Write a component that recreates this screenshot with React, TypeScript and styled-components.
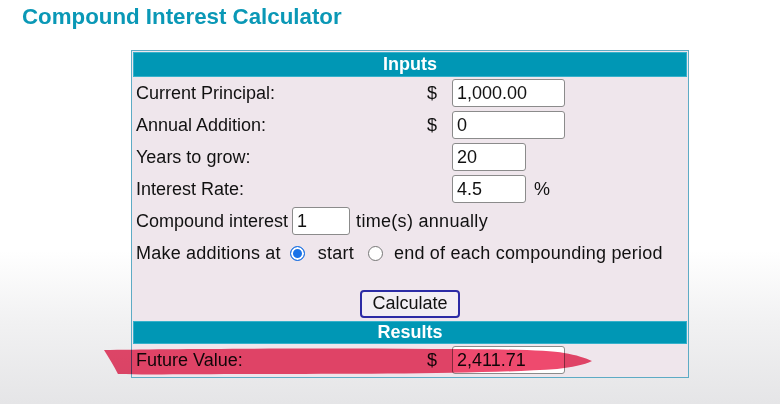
import React from "react";
import styled, { createGlobalStyle } from "styled-components";

const GlobalStyle = createGlobalStyle`
  html, body {
    margin: 0;
    padding: 0;
    height: 404px;
    overflow: hidden;
  }
  body {
    font-family: "Liberation Sans", Arial, sans-serif;
    background: linear-gradient(to bottom, #ffffff 0%, #ffffff 62%, #f1f1f2 80%, #e5e5e7 100%);
    color: #111;
  }
`;

const Page = styled.div`
  padding: 5px 0 0 22px;
`;

const Title = styled.h1`
  margin: 0;
  font-size: 22.3px;
  line-height: 24px;
  font-weight: bold;
  color: #0a98b6;
`;

const Panel = styled.div`
  position: relative;
  box-sizing: border-box;
  width: 558px;
  margin: 21px 0 0 109px;
  border: 1px solid #5eabc5;
  padding: 1px;
  background: #efe6ec;
  font-size: 18px;
`;

const SectionBar = styled.div<{ $h: number; $mt?: number }>`
  height: ${(p) => p.$h}px;
  margin-top: ${(p) => p.$mt ?? 0}px;
  background: #0097b5;
  border: 1px solid #36b1cb;
  box-sizing: border-box;
  color: #ffffff;
  font-weight: bold;
  font-size: 18px;
  display: flex;
  align-items: center;
  justify-content: center;
`;

const Row = styled.div`
  display: grid;
  grid-template-columns: 290px 24px 1fr;
  align-items: center;
  height: 32px;
  position: relative;
`;

const Label = styled.div`
  padding-left: 3px;
  white-space: nowrap;
`;

const Dollar = styled.div`
  text-align: right;
  padding-right: 10px;
`;

const InputCell = styled.div`
  padding-left: 5px;
  display: flex;
  align-items: center;
  gap: 8px;
`;

const Field = styled.input<{ $w: number }>`
  box-sizing: border-box;
  width: ${(p) => p.$w}px;
  height: 28px;
  border: 1px solid #8b8b8b;
  border-radius: 3px;
  background: #ffffff;
  font-family: "Liberation Sans", Arial, sans-serif;
  font-size: 18px;
  letter-spacing: 0;
  color: #111;
  padding: 0 4px;
  margin: 0;
  outline: none;
`;

const FlowRow = styled.div<{ $ls: number }>`
  display: flex;
  align-items: center;
  height: 32px;
  padding-left: 3px;
  white-space: nowrap;
  letter-spacing: ${(p) => p.$ls}px;
`;

const Spaced = styled.span`
  letter-spacing: 0.3px;
`;

const Gap = styled.span<{ $w: number }>`
  display: inline-block;
  width: ${(p) => p.$w}px;
`;

const Radio = styled.span<{ $checked?: boolean; $ml: number; $mr: number }>`
  box-sizing: border-box;
  display: inline-block;
  flex: none;
  width: 15px;
  height: 15px;
  border-radius: 50%;
  margin: 0 ${(p) => p.$mr}px 0 ${(p) => p.$ml}px;
  background: ${(p) => (p.$checked ? "#1a73e8" : "#ffffff")};
  border: ${(p) => (p.$checked ? "1px solid #1a6fe0" : "1px solid #767676")};
  box-shadow: ${(p) => (p.$checked ? "inset 0 0 0 2px #ffffff" : "none")};
`;

const Spacer = styled.div`
  height: 19px;
`;

const ButtonRow = styled.div`
  height: 31px;
  display: flex;
  align-items: center;
  justify-content: center;
`;

const CalcButton = styled.button`
  box-sizing: border-box;
  width: 100px;
  height: 28px;
  border: 2px solid #2b2ba6;
  border-radius: 4px;
  background: #f2eef4;
  font-family: "Liberation Sans", Arial, sans-serif;
  font-size: 18px;
  color: #111;
  padding: 0;
`;

const Highlight = styled.svg`
  position: absolute;
  left: -29px;
  top: 2px;
  width: 488px;
  height: 30px;
  mix-blend-mode: multiply;
  pointer-events: none;
`;

export default function App() {
  return (
    <>
      <GlobalStyle />
      <Page>
        <Title>Compound Interest Calculator</Title>
        <Panel>
          <SectionBar $h={25}>Inputs</SectionBar>
          <Row>
            <Label>Current Principal:</Label>
            <Dollar>$</Dollar>
            <InputCell>
              <Field $w={113} defaultValue="1,000.00" />
            </InputCell>
          </Row>
          <Row>
            <Label>Annual Addition:</Label>
            <Dollar>$</Dollar>
            <InputCell>
              <Field $w={113} defaultValue="0" />
            </InputCell>
          </Row>
          <Row>
            <Label>Years to grow:</Label>
            <Dollar />
            <InputCell>
              <Field $w={74} defaultValue="20" />
            </InputCell>
          </Row>
          <Row>
            <Label>Interest Rate:</Label>
            <Dollar />
            <InputCell>
              <Field $w={74} defaultValue="4.5" />
              <span>%</span>
            </InputCell>
          </Row>
          <FlowRow $ls={0}>
            Compound interest
            <Gap $w={4} />
            <Field $w={58} defaultValue="1" />
            <Gap $w={6} />
            <Spaced>time(s) annually</Spaced>
          </FlowRow>
          <FlowRow $ls={0.22}>
            Make additions at
            <Radio $checked $ml={9} $mr={13} />
            start
            <Radio $ml={14} $mr={11} />
            end of each compounding period
          </FlowRow>
          <Spacer />
          <ButtonRow>
            <CalcButton>Calculate</CalcButton>
          </ButtonRow>
          <SectionBar $h={23} $mt={2}>Results</SectionBar>
          <Row>
            <Label>Future Value:</Label>
            <Dollar>$</Dollar>
            <InputCell>
              <Field $w={113} defaultValue="2,411.71" readOnly />
            </InputCell>
            <Highlight viewBox="0 0 490 30" preserveAspectRatio="none">
              <path
                d="M0,4 C60,3 200,2 330,3 C400,3 445,4 462,7 C474,9 484,12 490,15 C482,19 470,21 455,23 C380,28 260,28 150,28 C90,28 40,29 14,28 C10,20 5,12 0,4 Z"
                fill="#ee4a6e"
              />
            </Highlight>
          </Row>
        </Panel>
      </Page>
    </>
  );
}
